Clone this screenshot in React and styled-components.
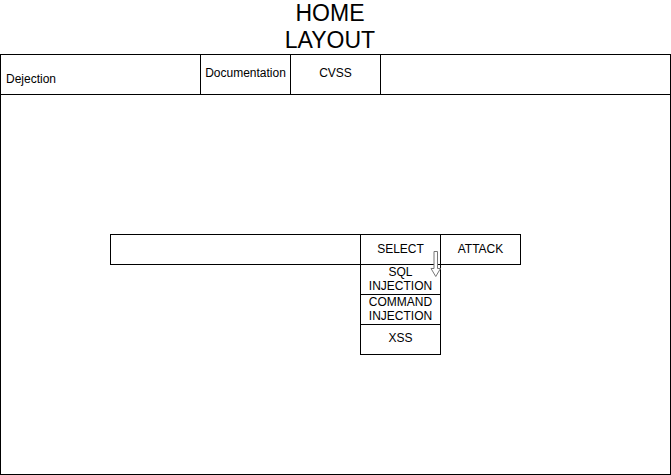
import React from 'react'
import styled, { createGlobalStyle } from 'styled-components'

const GlobalStyle = createGlobalStyle`
  html, body {
    margin: 0;
    padding: 0;
    background: #fff;
  }
  body {
    font-family: "Liberation Sans", Arial, sans-serif;
    color: #000;
  }
  * {
    box-sizing: border-box;
  }
`

const menuItems = [
    ['SQL', 'INJECTION'],
    ['COMMAND', 'INJECTION'],
    ['XSS'],
]

const DownArrow = () => (
    <svg width="12" height="27" viewBox="0 0 12 27">
        <path
            d="M4 0.5 H7.5 V17.5 H10.5 L5.75 25.5 L1 17.5 H4 Z"
            fill="#fff"
            stroke="#777"
            strokeWidth="1"
        />
    </svg>
)

const App = () => {
    return (
        <Page>
            <GlobalStyle />
            <Title>
                HOME
                <br />
                LAYOUT
            </Title>
            <Nav>
                <NavCell width={200} shift="down" align="left">Dejection</NavCell>
                <NavCell width={90} shift="up">Documentation</NavCell>
                <NavCell width={90} shift="up">CVSS</NavCell>
            </Nav>
            <Main>
                <SearchRow>
                    <Input />
                    <SelectCol>
                        <Select>SELECT</Select>
                        {menuItems.map((lines, i) => (
                            <MenuItem key={i} twoLines={lines.length > 1}>
                                {lines.map((l, j) => (
                                    <span key={j}>{l}</span>
                                ))}
                            </MenuItem>
                        ))}
                        <ArrowMark>
                            <DownArrow />
                        </ArrowMark>
                    </SelectCol>
                    <Attack>ATTACK</Attack>
                </SearchRow>
            </Main>
        </Page>
    )
}

export default App

const Page = styled.div`
    width: 671px;
    height: 475px;
    display: flex;
    flex-direction: column;
`

const Title = styled.div`
    width: 660px;
    height: 54px;
    text-align: center;
    font-size: 23px;
    line-height: 27px;
`

const Nav = styled.div`
    display: flex;
    height: 41px;
    border: 1px solid #000;
`

const NavCell = styled.div`
    width: ${p => p.width}px;
    border-right: 1px solid #000;
    display: flex;
    align-items: center;
    justify-content: ${p => (p.align === 'left' ? 'flex-start' : 'center')};
    padding-left: ${p => (p.align === 'left' ? '5px' : '0')};
    padding-top: ${p => (p.shift === 'down' ? '9px' : '0')};
    padding-bottom: ${p => (p.shift === 'up' ? '3px' : '0')};
    font-size: 12px;
    line-height: 14px;
`

const Main = styled.div`
    height: 380px;
    border: 1px solid #000;
    border-top: none;
    padding: 139px 0 0 109px;
`

const SearchRow = styled.div`
    display: flex;
    align-items: flex-start;
    font-size: 12px;
    line-height: 14px;
`

const Input = styled.div`
    width: 250px;
    height: 31px;
    border: 1px solid #000;
    border-right: none;
`

const SelectCol = styled.div`
    position: relative;
    width: 81px;
    display: flex;
    flex-direction: column;
`

const Select = styled.div`
    height: 31px;
    border: 1px solid #000;
    display: flex;
    align-items: center;
    justify-content: center;
    padding-bottom: 2px;
`

const MenuItem = styled.div`
    height: 30px;
    border: 1px solid #000;
    border-top: none;
    display: flex;
    flex-direction: column;
    align-items: center;
    justify-content: center;
    padding-bottom: ${p => (p.twoLines ? '2px' : '3px')};
    text-align: center;
`

const ArrowMark = styled.div`
    position: absolute;
    left: 70px;
    top: 17px;
    line-height: 0;
`

const Attack = styled.div`
    width: 80px;
    height: 31px;
    border: 1px solid #000;
    border-left: none;
    display: flex;
    align-items: center;
    justify-content: center;
    padding-bottom: 2px;
`
